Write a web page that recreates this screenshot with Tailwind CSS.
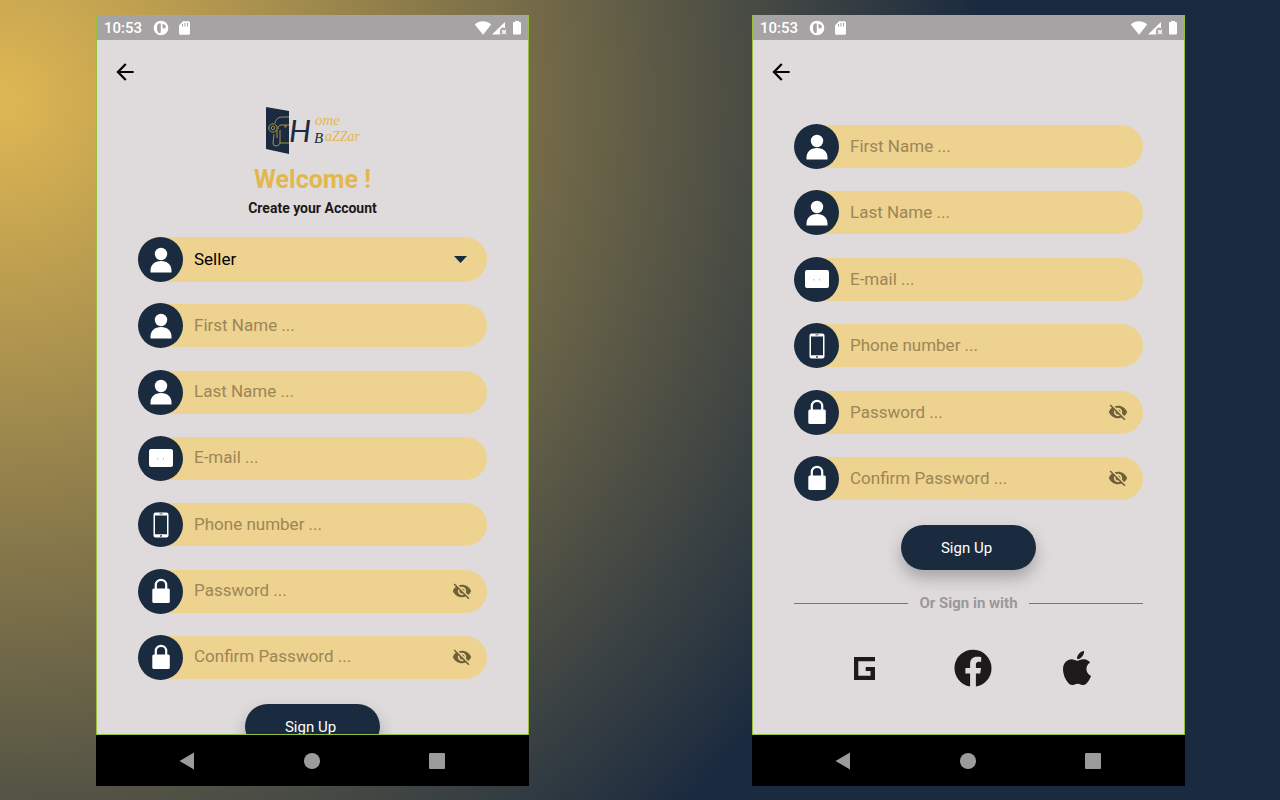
<!DOCTYPE html>
<html lang="en">
<head>
<meta charset="utf-8">
<meta name="viewport" content="width=device-width, initial-scale=1">
<title>Home Bazzar – Sign Up</title>
<script src="https://cdn.jsdelivr.net/npm/@tailwindcss/browser@4"></script>
</head>
<body class="min-h-screen bg-[radial-gradient(circle_at_0_100px,#dcb553_20px,#1b2b3f_980px)] font-['Roboto',sans-serif]">

<!-- Shared icons -->
<svg class="hidden" aria-hidden="true">
  <symbol id="user" viewBox="0 0 24 26"><circle cx="12" cy="7" r="6.2"/><path d="M1.500 25.500v-2c0-5.500 4-9.500 10.500-9.500s10.500 4 10.500 9.500v2z"/></symbol>
  <symbol id="mail" viewBox="0 0 24 26"><rect y="4" width="24" height="18" rx="2"/><path d="M8.500 13.500h.7v.7h-.7zM14 13.500h.7v.7H14z" fill="#1b2b3f"/></symbol>
  <symbol id="phone" viewBox="0 0 24 26"><path fill-rule="evenodd" d="M6.500.5h11a2 2 0 0 1 2 2v21a2 2 0 0 1-2 2h-11a2 2 0 0 1-2-2v-21a2 2 0 0 1 2-2zM6 3.500v18.700h12V3.500zM12 23a.9.9 0 1 0 0 1.800.9.9 0 0 0 0-1.800zM10.500 1.500v.7h3v-.7z"/></symbol>
  <symbol id="lock" viewBox="0 0 24 26"><path d="M6.800 12V7a5.200 5.200 0 0 1 10.400 0v5" fill="none" stroke="#fff" stroke-width="2.200"/><rect x="3.300" y="10.500" width="17.500" height="14.500" rx="1.500"/></symbol>
  <symbol id="eye-off" viewBox="0 0 24 24"><path d="M12 7c2.760 0 5 2.240 5 5 0 .65-.13 1.260-.36 1.830l2.920 2.920c1.510-1.260 2.700-2.890 3.430-4.750-1.730-4.390-6-7.500-11-7.500-1.400 0-2.740.25-3.980.7l2.160 2.160C10.740 7.130 11.350 7 12 7zM2 4.270l2.280 2.280.46.46C3.080 8.300 1.780 10.020 1 12c1.730 4.390 6 7.500 11 7.500 1.550 0 3.030-.3 4.380-.84l.42.42L19.730 22 21 20.730 3.270 3 2 4.270zM7.530 9.800l1.550 1.550c-.05.21-.08.43-.08.65 0 1.660 1.340 3 3 3 .22 0 .44-.03.65-.08l1.550 1.550c-.67.33-1.410.53-2.200.53-2.760 0-5-2.240-5-5 0-.79.2-1.530.53-2.200zm4.310-.78l3.150 3.150.02-.16c0-1.660-1.340-3-3-3l-.17.01z"/></symbol>
  <symbol id="back" viewBox="0 0 24 24"><path d="M20 11H7.830l5.590-5.590L12 4l-8 8 8 8 1.410-1.410L7.830 13H20v-2z"/></symbol>
  <symbol id="status-left" viewBox="0 0 38 16"><path fill-rule="evenodd" d="M8 .7a7.300 7.300 0 1 0 0 14.600A7.300 7.300 0 0 0 8 .7zM5.800 3.500h2v8c0 1.500-1 2-2 1.600C4.500 12 4 10.500 4 8s.5-4 1.800-4.500zM9.300 4.300c2.300-.4 3.400.6 3.400 2.200S11.500 8.800 9.800 8.500V6.500h-.5z"/><path fill-rule="evenodd" d="M30 1.300h5.500A1.500 1.500 0 0 1 37 2.800v10.400a1.500 1.500 0 0 1-1.500 1.500h-8a1.500 1.500 0 0 1-1.500-1.500V5.500zM29 4v2.500h1V4zm2.500-1v3.500h1V3zM34 3v3.500h1V3z"/></symbol>
  <symbol id="status-right" viewBox="0 0 48 16"><path d="M.8 4.500C5.500.3 12.500.3 17.200 4.500L9 14.700z"/><path d="M18 14.500 31 2v6h-1.800V6.500L26 9.500v5z"/><path d="m28 10 4 4m0-4-4 4" stroke="#fff" stroke-width="1.400"/><path d="M41 2V1h4v1h1a1 1 0 0 1 1 1v10.500a1 1 0 0 1-1 1h-6a1 1 0 0 1-1-1V3a1 1 0 0 1 1-1z"/></symbol>
</svg>

<div class="flex items-start justify-center gap-[223px] pt-[15px] pr-[95px] pb-3 pl-24">

  <!-- Top of the form -->
  <main class="min-w-0 flex-1">
    <div class="h-[720px] overflow-hidden border border-[#9abf3c] bg-[#dfdbdc]">
      <header class="flex h-6 items-center bg-[#a5a3a4] px-[7px] text-[15px] font-medium text-white">
        <span>10:53</span>
        <svg class="ml-[11px] h-4 w-[38px] fill-white"><use href="#status-left"/></svg>
        <svg class="-mr-px ml-auto h-4 w-12 fill-white"><use href="#status-right"/></svg>
      </header>
      <div class="flex h-16 items-center px-[15px]">
        <button type="button" aria-label="Back"><svg class="size-[26px]"><use href="#back"/></svg></button>
      </div>
      <section class="flex flex-col items-center px-[41px]">
        <svg class="mt-[3px] h-12 w-24" viewBox="0 0 96 48" role="img" aria-label="Home Bazzar">
          <path d="M1 0 24 4v43L1 42z" fill="#1b2b3f"/>
          <g fill="none" stroke="#c9a94f" stroke-width=".8"><path d="M24 10h-6c-5 0-7 2-8 6M24 18h-8c-2 0-3 2-3 4M24 36h-9M9 27l-1 9q0 3 3 3t4-3V23"/><circle cx="8" cy="21" r="4.200"/><circle cx="8" cy="21" r="1.800"/><path d="M12 23v8"/><circle cx="20.500" cy="19.500" r=".7"/></g>
          <g font-style="italic">
            <text x="24" y="35" font-family="Lato, sans-serif" font-size="31" font-weight="400" fill="#1b2b3f">H</text>
            <text x="50" y="18" font-family="Liberation Serif, serif" font-size="15" fill="#e2b84e">ome</text>
            <text x="49" y="36" font-family="Liberation Serif, serif" font-size="15" fill="#1b2b3f">B</text>
            <text x="60" y="34" font-family="Liberation Serif, serif" font-size="14" fill="#e2b84e">aZZar</text>
          </g>
        </svg>
        <h1 class="mt-[7px] text-[25px] leading-9 font-bold text-[#e2b84e]">Welcome !</h1>
        <p class="text-sm leading-5 font-bold text-[#1c1819]">Create your Account</p>
        <form class="mt-[19px] flex w-full flex-col items-center">
          <div class="flex min-h-[443px] w-full flex-col justify-between text-[17px] text-black">
            <div class="flex h-[45px] items-center rounded-full bg-[#eed28f]">
              <label for="role" aria-label="Account type" class="grid size-[45px] shrink-0 place-items-center rounded-full bg-[#1b2b3f]"><svg class="h-[26px] w-6 fill-white"><use href="#user"/></svg></label>
              <select id="role" class="h-full min-w-0 flex-1 appearance-none bg-transparent pl-[11px] outline-none"><option>Seller</option><option>Buyer</option></select>
              <svg class="pointer-events-none mr-5 h-[7px] w-[13px] fill-[#1b2b3f]" viewBox="0 0 13 7"><path d="M0 0h13L6.500 7z"/></svg>
            </div>
            <div class="flex h-[45px] items-center">
              <label for="first" aria-label="First name" class="z-10 grid size-[45px] shrink-0 place-items-center rounded-full bg-[#1b2b3f]"><svg class="h-[26px] w-6 fill-white"><use href="#user"/></svg></label>
              <input id="first" type="text" placeholder="First Name ..." class="-ml-6 h-[43px] min-w-0 flex-1 rounded-r-full bg-[#eed28f] pb-0.5 pl-[35px] outline-none placeholder:text-[#9b8656]">
            </div>
            <div class="flex h-[45px] items-center">
              <label for="last" aria-label="Last name" class="z-10 grid size-[45px] shrink-0 place-items-center rounded-full bg-[#1b2b3f]"><svg class="h-[26px] w-6 fill-white"><use href="#user"/></svg></label>
              <input id="last" type="text" placeholder="Last Name ..." class="-ml-6 h-[43px] min-w-0 flex-1 rounded-r-full bg-[#eed28f] pb-0.5 pl-[35px] outline-none placeholder:text-[#9b8656]">
            </div>
            <div class="flex h-[45px] items-center">
              <label for="email" aria-label="E-mail" class="z-10 grid size-[45px] shrink-0 place-items-center rounded-full bg-[#1b2b3f]"><svg class="h-[26px] w-6 fill-white"><use href="#mail"/></svg></label>
              <input id="email" type="email" placeholder="E-mail ..." class="-ml-6 h-[43px] min-w-0 flex-1 rounded-r-full bg-[#eed28f] pb-0.5 pl-[35px] outline-none placeholder:text-[#9b8656]">
            </div>
            <div class="flex h-[45px] items-center">
              <label for="tel" aria-label="Phone number" class="z-10 grid size-[45px] shrink-0 place-items-center rounded-full bg-[#1b2b3f]"><svg class="h-[26px] w-6 fill-white"><use href="#phone"/></svg></label>
              <input id="tel" type="tel" placeholder="Phone number ..." class="-ml-6 h-[43px] min-w-0 flex-1 rounded-r-full bg-[#eed28f] pb-0.5 pl-[35px] outline-none placeholder:text-[#9b8656]">
            </div>
            <div class="flex h-[45px] items-center">
              <label for="pass" aria-label="Password" class="z-10 grid size-[45px] shrink-0 place-items-center rounded-full bg-[#1b2b3f]"><svg class="h-[26px] w-6 fill-white"><use href="#lock"/></svg></label>
              <div class="-ml-6 flex h-[43px] min-w-0 flex-1 items-center rounded-r-full bg-[#eed28f]">
                <input id="pass" type="password" placeholder="Password ..." class="h-full min-w-0 flex-1 pb-0.5 pl-[35px] outline-none placeholder:text-[#9b8656]">
                <button type="button" aria-label="Show password" class="mr-[15px]"><svg class="size-5 fill-[#6f6037]"><use href="#eye-off"/></svg></button>
              </div>
            </div>
            <div class="flex h-[45px] items-center">
              <label for="confirm" aria-label="Confirm password" class="z-10 grid size-[45px] shrink-0 place-items-center rounded-full bg-[#1b2b3f]"><svg class="h-[26px] w-6 fill-white"><use href="#lock"/></svg></label>
              <div class="-ml-6 flex h-[43px] min-w-0 flex-1 items-center rounded-r-full bg-[#eed28f]">
                <input id="confirm" type="password" placeholder="Confirm Password ..." class="h-full min-w-0 flex-1 pb-0.5 pl-[35px] outline-none placeholder:text-[#9b8656]">
                <button type="button" aria-label="Show password" class="mr-[15px]"><svg class="size-5 fill-[#6f6037]"><use href="#eye-off"/></svg></button>
              </div>
            </div>
          </div>
          <button type="submit" class="mt-6 h-[45px] w-[135px] rounded-full bg-[#1b2b3f] pt-px pr-1 text-[15px] text-white shadow-[0_8px_16px_rgb(0_0_0/0.25)]">Sign Up</button>
        </form>
      </section>
    </div>
    <nav class="flex h-[51px] items-center justify-center gap-[109px] bg-black pr-px">
      <button type="button" aria-label="Back"><svg class="h-[18px] w-4 fill-[#9b9b9b]" viewBox="0 0 16 18"><path d="M15 .5v17L.5 9z"/></svg></button>
      <button type="button" aria-label="Home" class="size-4 rounded-full bg-[#9b9b9b]"></button>
      <button type="button" aria-label="Recent apps" class="size-4 rounded-[1px] bg-[#9b9b9b]"></button>
    </nav>
  </main>

  <!-- Form scrolled to its end -->
  <main class="min-w-0 flex-1">
    <div class="h-[720px] overflow-hidden border border-[#9abf3c] bg-[#dfdbdc]">
      <header class="flex h-6 items-center bg-[#a5a3a4] px-[7px] text-[15px] font-medium text-white">
        <span>10:53</span>
        <svg class="ml-[11px] h-4 w-[38px] fill-white"><use href="#status-left"/></svg>
        <svg class="-mr-px ml-auto h-4 w-12 fill-white"><use href="#status-right"/></svg>
      </header>
      <div class="flex h-16 items-center px-[15px]">
        <button type="button" aria-label="Back"><svg class="size-[26px]"><use href="#back"/></svg></button>
      </div>
      <section class="px-[41px]">
        <form class="mt-5 flex w-full flex-col items-center">
          <div class="flex min-h-[377px] w-full flex-col justify-between text-[17px] text-black">
            <div class="flex h-[45px] items-center">
              <label for="first2" aria-label="First name" class="z-10 grid size-[45px] shrink-0 place-items-center rounded-full bg-[#1b2b3f]"><svg class="h-[26px] w-6 fill-white"><use href="#user"/></svg></label>
              <input id="first2" type="text" placeholder="First Name ..." class="-ml-6 h-[43px] min-w-0 flex-1 rounded-r-full bg-[#eed28f] pb-px pl-[35px] outline-none placeholder:text-[#9b8656]">
            </div>
            <div class="flex h-[45px] items-center">
              <label for="last2" aria-label="Last name" class="z-10 grid size-[45px] shrink-0 place-items-center rounded-full bg-[#1b2b3f]"><svg class="h-[26px] w-6 fill-white"><use href="#user"/></svg></label>
              <input id="last2" type="text" placeholder="Last Name ..." class="-ml-6 h-[43px] min-w-0 flex-1 rounded-r-full bg-[#eed28f] pb-px pl-[35px] outline-none placeholder:text-[#9b8656]">
            </div>
            <div class="flex h-[45px] items-center">
              <label for="email2" aria-label="E-mail" class="z-10 grid size-[45px] shrink-0 place-items-center rounded-full bg-[#1b2b3f]"><svg class="h-[26px] w-6 fill-white"><use href="#mail"/></svg></label>
              <input id="email2" type="email" placeholder="E-mail ..." class="-ml-6 h-[43px] min-w-0 flex-1 rounded-r-full bg-[#eed28f] pb-px pl-[35px] outline-none placeholder:text-[#9b8656]">
            </div>
            <div class="flex h-[45px] items-center">
              <label for="tel2" aria-label="Phone number" class="z-10 grid size-[45px] shrink-0 place-items-center rounded-full bg-[#1b2b3f]"><svg class="h-[26px] w-6 fill-white"><use href="#phone"/></svg></label>
              <input id="tel2" type="tel" placeholder="Phone number ..." class="-ml-6 h-[43px] min-w-0 flex-1 rounded-r-full bg-[#eed28f] pb-px pl-[35px] outline-none placeholder:text-[#9b8656]">
            </div>
            <div class="flex h-[45px] items-center">
              <label for="pass2" aria-label="Password" class="z-10 grid size-[45px] shrink-0 place-items-center rounded-full bg-[#1b2b3f]"><svg class="h-[26px] w-6 fill-white"><use href="#lock"/></svg></label>
              <div class="-ml-6 flex h-[43px] min-w-0 flex-1 items-center rounded-r-full bg-[#eed28f]">
                <input id="pass2" type="password" placeholder="Password ..." class="h-full min-w-0 flex-1 pb-px pl-[35px] outline-none placeholder:text-[#9b8656]">
                <button type="button" aria-label="Show password" class="mr-[15px]"><svg class="size-5 fill-[#6f6037]"><use href="#eye-off"/></svg></button>
              </div>
            </div>
            <div class="flex h-[45px] items-center">
              <label for="confirm2" aria-label="Confirm password" class="z-10 grid size-[45px] shrink-0 place-items-center rounded-full bg-[#1b2b3f]"><svg class="h-[26px] w-6 fill-white"><use href="#lock"/></svg></label>
              <div class="-ml-6 flex h-[43px] min-w-0 flex-1 items-center rounded-r-full bg-[#eed28f]">
                <input id="confirm2" type="password" placeholder="Confirm Password ..." class="h-full min-w-0 flex-1 pb-px pl-[35px] outline-none placeholder:text-[#9b8656]">
                <button type="button" aria-label="Show password" class="mr-[15px]"><svg class="size-5 fill-[#6f6037]"><use href="#eye-off"/></svg></button>
              </div>
            </div>
          </div>
          <button type="submit" class="mt-6 h-[45px] w-[135px] rounded-full bg-[#1b2b3f] pt-px pr-1 text-[15px] text-white shadow-[0_8px_16px_rgb(0_0_0/0.25)]">Sign Up</button>
        </form>
        <div class="mt-[23px] flex items-center gap-[11px]">
          <div class="h-px flex-1 bg-[#777475]"></div>
          <span class="text-[15px] leading-5 font-bold text-[#9b9899]">Or Sign in with</span>
          <div class="h-px flex-1 bg-[#777475]"></div>
        </div>
        <div class="mt-[35px] flex items-center justify-between px-[46px]">
          <button type="button" aria-label="Sign in with Google" class="flex w-12 justify-center"><svg class="h-[23px] w-[21px] fill-[#1e1a1b]" viewBox="0 0 21 23"><path d="M0 0h21v4.300H4.300v14.400h12.200V14h-4.800v-4H21v13H0z"/></svg></button>
          <button type="button" aria-label="Sign in with Facebook"><svg class="size-10 fill-[#1e1a1b]" viewBox="0 0 40 40"><path d="M38.500 20.100A18.500 18.500 0 1 0 17.100 38.400V25.500h-4.700v-5.400h4.700V16c0-4.700 2.800-7.200 7-7.200 2 0 4.100.4 4.100.4v4.600h-2.300c-2.300 0-3 1.400-3 2.900v3.400H28l-.8 5.400h-4.300v12.900A18.500 18.500 0 0 0 38.500 20.100z"/></svg></button>
          <button type="button" aria-label="Sign in with Apple" class="flex w-10 justify-center"><svg class="h-[34px] w-7 fill-[#1e1a1b]" viewBox="4 32 376 448" preserveAspectRatio="none"><path d="M318.700 268.700c-.2-36.700 16.400-64.400 50-84.800-18.800-26.900-47.200-41.700-84.700-44.600-35.500-2.800-74.300 20.700-88.500 20.700-15 0-49.400-19.700-76.400-19.700C63.300 141.200 4 184.800 4 273.500q0 39.300 14.400 81.200c12.800 36.700 59 126.700 107.200 125.200 25.200-.6 43-17.900 75.800-17.900 31.800 0 48.300 17.900 76.400 17.900 48.600-.7 90.400-82.500 102.600-119.300-65.200-30.700-61.700-90-61.700-91.900zm-56.600-164.200c27.300-32.400 24.800-61.900 24-72.500-24.100 1.400-52 16.400-67.900 34.900-17.500 19.800-27.800 44.300-25.600 71.900 26.100 2 49.900-11.400 69.500-34.300z"/></svg></button>
        </div>
      </section>
    </div>
    <nav class="flex h-[51px] items-center justify-center gap-[109px] bg-black pr-px">
      <button type="button" aria-label="Back"><svg class="h-[18px] w-4 fill-[#9b9b9b]" viewBox="0 0 16 18"><path d="M15 .5v17L.5 9z"/></svg></button>
      <button type="button" aria-label="Home" class="size-4 rounded-full bg-[#9b9b9b]"></button>
      <button type="button" aria-label="Recent apps" class="size-4 rounded-[1px] bg-[#9b9b9b]"></button>
    </nav>
  </main>
</div>
</body>
</html>
